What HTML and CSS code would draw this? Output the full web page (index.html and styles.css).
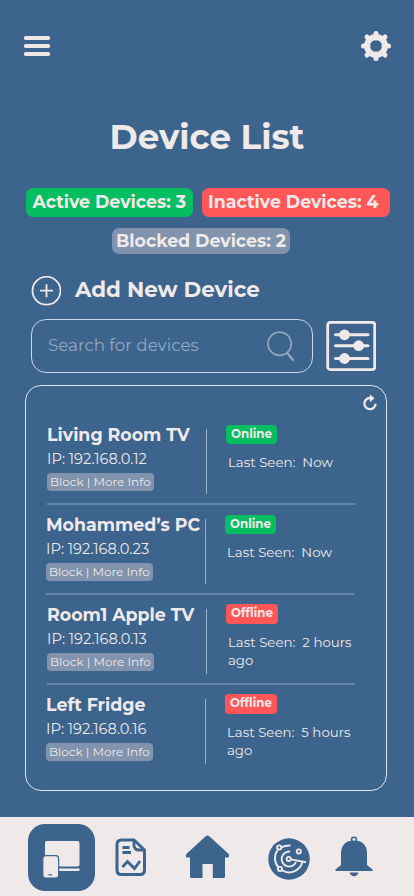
FILE: index.html
```html
<!DOCTYPE html>
<html lang="en">
<head>
<meta charset="utf-8">
<title>Device List</title>
<link rel="stylesheet" href="styles.css">
</head>
<body>
<div class="app">
  <header class="topbar">
    <svg class="menu" width="28" height="22" viewBox="0 0 28 22" stroke="#efe9ea" stroke-width="4" stroke-linecap="round"><path d="M2.800 3H25.200M2.800 11H25.200M2.800 19H25.200"/></svg>
    <svg class="gear" width="32" height="32" viewBox="-16 -16 32 32">
      <g stroke="#efe9ea" stroke-width="5" stroke-linecap="round"><path d="M0 -12.500V-8M0 12.500V8M-12.500 0H-8M12.500 0H8M-9 -9L-6 -6M9 9L6 6M-9 9L-6 6M9 -9L6 -6"/></g>
      <circle r="9" fill="none" stroke="#efe9ea" stroke-width="5.8"/>
    </svg>
  </header>

  <h1 class="title">Device List</h1>

  <div class="stats">
    <span class="stat active">Active Devices: 3</span>
    <span class="stat inactive">Inactive Devices: 4</span>
  </div>
  <div class="stats second">
    <span class="stat blocked">Blocked Devices: 2</span>
  </div>

  <div class="add">
    <svg width="30" height="30" viewBox="0 0 30 30" fill="none" stroke="#efe9ea" stroke-width="1.8" stroke-linecap="round"><circle cx="15.500" cy="14.700" r="14"/><path d="M15.500 9V20.500M9.800 14.700H21.200"/></svg>
    <span class="add-label">Add New Device</span>
  </div>

  <div class="search-row">
    <div class="search">
      <span class="placeholder">Search for devices</span>
      <svg width="28" height="30" viewBox="0 0 28 30" fill="none" stroke="#91a8c3"><circle cx="12.600" cy="12.700" r="11.600" stroke-width="1.700"/><path d="M19.800 21.500L26.500 29.800" stroke-width="2.200"/></svg>
    </div>
    <svg class="filter" width="50" height="50" viewBox="0 0 50 50">
      <rect x="1.700" y="1.400" width="47" height="47.200" rx="2.500" fill="none" stroke="#efe9ea" stroke-width="2.800"/>
      <g stroke="#efe9ea" stroke-width="3" stroke-linecap="round"><path d="M9.500 13.800H42M9.500 24.700H42M9.500 37.500H42"/></g>
      <g fill="#efe9ea"><circle cx="18.500" cy="13.800" r="5.400"/><circle cx="32.700" cy="24.700" r="5.400"/><circle cx="18.500" cy="37.500" r="5.400"/></g>
    </svg>
  </div>

  <main class="card">
    <svg class="refresh" width="16" height="18" viewBox="0 0 16 18"><path d="M9.500 4H8A5.600 5.600 0 1 0 13.600 9.800" fill="none" stroke="#efe9ea" stroke-width="2.300"/><path d="M7.800 .2L12.600 4.200L7.800 8.200Z" fill="#efe9ea"/></svg>

    <section class="device">
      <div class="info"><h2 class="name">Living Room TV</h2><p class="ip">IP: 192.168.0.12</p><div class="actions">Block | More Info</div></div>
      <i class="split"></i>
      <div class="status"><span class="badge online">Online</span><p class="seen">Last Seen:&nbsp; Now</p></div>
    </section>
    <section class="device shifted">
      <div class="info"><h2 class="name">Mohammed’s PC</h2><p class="ip">IP: 192.168.0.23</p><div class="actions">Block | More Info</div></div>
      <i class="split"></i>
      <div class="status"><span class="badge online">Online</span><p class="seen">Last Seen:&nbsp; Now</p></div>
    </section>
    <section class="device">
      <div class="info"><h2 class="name">Room1 Apple TV</h2><p class="ip">IP: 192.168.0.13</p><div class="actions">Block | More Info</div></div>
      <i class="split"></i>
      <div class="status"><span class="badge offline">Offline</span><p class="seen">Last Seen:&nbsp; 2 hours<br>ago</p></div>
    </section>
    <section class="device shifted">
      <div class="info"><h2 class="name">Left Fridge</h2><p class="ip">IP: 192.168.0.16</p><div class="actions">Block | More Info</div></div>
      <i class="split"></i>
      <div class="status"><span class="badge offline">Offline</span><p class="seen">Last Seen:&nbsp; 5 hours<br>ago</p></div>
    </section>
  </main>

  <nav class="tabs">
    <a class="tab current">
      <svg width="67" height="67" viewBox="0 0 67 67">
        <rect x="17" y="17" width="34.500" height="25.500" rx="2" fill="#efe9ea"/>
        <path d="M30 44.500H51.500V47H30Z" fill="#efe9ea"/>
        <rect x="14.800" y="31.600" width="15.800" height="22.500" rx="2.800" fill="#efe9ea" stroke="#3d648d" stroke-width="1.200"/>
        <path d="M20.500 50.800H24" stroke="#3d648d" stroke-width="1.200"/>
      </svg>
    </a>
    <a class="tab report">
      <svg width="32" height="39" viewBox="0 0 32 39" fill="none" stroke="#3d648d" stroke-width="3">
        <path d="M6.500 2H19L29.500 12V32Q29.500 36.500 25 36.500H6.500Q2 36.500 2 32V6.500Q2 2 6.500 2Z" stroke-linejoin="round"/>
        <path d="M19 3V7.500Q19.500 12 24 12H29" stroke-width="2.800"/>
        <path d="M7.500 9.500H14.500M7.500 14.500H16" stroke-width="2.800"/>
        <path d="M7.500 29L12.500 23.500L19.500 30.500L25 23" stroke-width="2.800"/>
      </svg>
    </a>
    <a class="tab home">
      <svg width="45" height="44" viewBox="0 0 45 44" fill="#3d648d"><path d="M20.700 1.200Q22.500-.3 24.300 1.200L43.700 19Q44.800 22 43 22.500H40V41.500Q40 43 38.500 43H27.800V29H17.500V43H6.500Q5 43 5 41.500V22.500H2Q.2 22 1.300 19Z"/></svg>
    </a>
    <a class="tab radar">
      <svg width="42" height="42" viewBox="0 0 42 42" fill="none" stroke="#efe9ea" stroke-width="1.900">
        <circle cx="21" cy="21" r="20.700" fill="#3d648d" stroke="none"/>
        <path d="M22.500 7.500Q17 7.300 13.300 9.500M9.500 12.300A13.800 13.800 0 0 0 10.500 29.500M14 32.300A13.600 13.600 0 0 0 34.300 24.300"/>
        <path d="M22 13.600A7.500 7.500 0 1 0 28 24"/>
        <path d="M22.500 21.400L38 24.300" stroke-width="1.900"/>
        <circle cx="20.700" cy="21" r="2.100"/><circle cx="11.200" cy="9.500" r="2.100"/><circle cx="30.800" cy="13.500" r="2.100"/><circle cx="12" cy="31" r="2.100"/>
      </svg>
    </a>
    <a class="tab bell">
      <svg width="38" height="41" viewBox="0 0 38 41" fill="#3d648d">
        <circle cx="19" cy="3.700" r="2.500" fill="none" stroke="#3d648d" stroke-width="1.600"/>
        <path d="M6 17Q6.500 4.500 19 4.500Q31.500 4.500 32 17V29L37.500 33.500V35H.5V33.500L6 29Z"/>
        <path d="M14.500 36.500H23.500Q22.500 40.200 19 40.200Q15.500 40.200 14.500 36.500Z"/>
      </svg>
    </a>
  </nav>
</div>
</body>
</html>
```

FILE: styles.css
```css
* { box-sizing: border-box; margin: 0; padding: 0; }

body {
  width: 414px;
  height: 896px;
  overflow: hidden;
  background: #3d648d;
  color: #efe9ea;
  font-family: Montserrat, Inter, "Open Sans", sans-serif;
}

svg { display: block; flex: none; }

.app { display: flex; flex-direction: column; height: 896px; }

.topbar {
  display: flex;
  justify-content: space-between;
  align-items: center;
  height: 92px;
  padding: 0 22px 0 23px;
}

.title {
  height: 46px;
  margin-top: 22px;
  line-height: 46px;
  font-size: 34.1px;
  font-weight: 700;
  text-align: center;
}

.stats {
  display: flex;
  gap: 9px;
  height: 29px;
  margin: 28px 24px 0 26px;
}
.stats.second { height: 26px; margin: 11px 0 0 112px; }
.stat {
  border-radius: 7px;
  font-size: 17.4px;
  font-weight: 700;
  white-space: nowrap;
}
.active { width: 167px; padding-left: 6.5px; line-height: 28px; background: #05be61; }
.inactive { width: 188px; padding-left: 6px; line-height: 27px; background: #ff5757; }
.blocked { width: 178px; padding-left: 4px; line-height: 25px; background: #8193ad; }

.add {
  display: flex;
  align-items: center;
  gap: 14px;
  height: 30px;
  margin: 22px 0 0 31px;
}
.add-label { margin-top: -4px; font-size: 21.4px; font-weight: 700; line-height: 28px; white-space: nowrap; }

.search-row {
  display: flex;
  align-items: center;
  gap: 13px;
  height: 54px;
  margin: 13px 0 0 31px;
}
.search {
  display: flex;
  align-items: center;
  justify-content: space-between;
  width: 282px;
  height: 54px;
  padding: 0 17px 0 16px;
  border: 1px solid #c9d8ea;
  border-radius: 15px;
}
.placeholder { margin-top: -2px; font-size: 16.7px; font-weight: 400; line-height: 24px; color: #91a8c3; white-space: nowrap; }

.card {
  position: relative;
  width: 362px;
  height: 406px;
  margin: 12px 0 0 25px;
  padding: 29px 31px 0 21px;
  border: 1px solid #dbe4f0;
  border-radius: 16px;
}
.refresh { position: absolute; top: 8px; right: 8px; }

.device {
  display: grid;
  grid-template-columns: 159px 1px 1fr;
  height: 90px;
  border-bottom: 2px solid #6687ab;
}
.device:last-child { border-bottom: 0; }
.shifted { margin: 0 1px 0 -1px; }
.split { height: 65px; margin-top: 14px; background: #9aafc8; }

.name { margin-top: 9px; font-size: 17.4px; line-height: 21px; white-space: nowrap; }
.ip { margin-top: 4px; font-size: 14.6px; line-height: 20px; white-space: nowrap; }
.actions {
  width: 107px;
  height: 18px;
  margin-top: 4px;
  padding-left: 3px;
  border-radius: 4px;
  background: #8193ad;
  font-size: 12px;
  line-height: 17px;
  white-space: nowrap;
}

.status { padding-left: 19px; }
.badge {
  display: block;
  width: 51px;
  height: 19px;
  margin-top: 10px;
  border-radius: 4px;
  font-size: 11.8px;
  font-weight: 700;
  line-height: 18px;
  text-align: center;
}
.online { background: #05be61; }
.offline { width: 52px; height: 20px; margin-top: 9px; line-height: 18px; background: #ff5757; }
.seen { margin-top: 9px; padding-left: 2px; font-size: 13.35px; line-height: 18px; white-space: nowrap; }

.tabs {
  display: flex;
  align-items: center;
  height: 79px;
  margin-top: auto;
  padding-left: 28px;
  background: #efe9ea;
}
.current { height: 67px; margin-top: 1px; border-radius: 17px; background: #3d648d; }
.report { margin: 1px 0 0 20px; }
.home { margin-left: 38px; }
.radar { margin: 4px 0 0 37.5px; }
.bell { margin: -1px 0 0 25.5px; }
```
